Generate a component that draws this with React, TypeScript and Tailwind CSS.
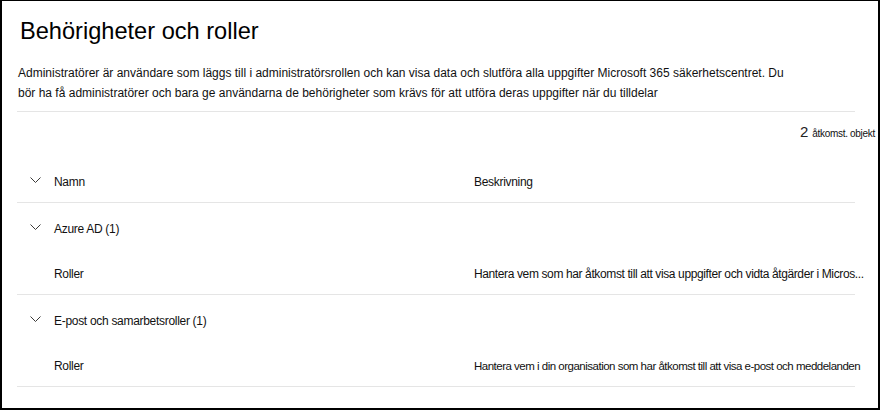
import React from "react";

function Chevron() {
  return (
    <svg width="11" height="6" viewBox="0 0 11 6" className="shrink-0 -mt-[4px]">
      <polyline points="0.5,0.5 5.5,5.5 10.5,0.5" fill="none" stroke="#3b3a39" strokeWidth="1" />
    </svg>
  );
}

export default function App() {
  return (
    <div className="w-[880px] h-[410px] bg-white border-black border-t border-l-2 border-r-2 border-b-2 overflow-hidden font-['Liberation_Sans',Arial,sans-serif] text-[#111]">
      <div className="pl-[15px] pr-[3px]">
        <h1 className="ml-[3px] pt-[14px] text-[23.6px] leading-[32px] text-black">Behörigheter och roller</h1>
        <p className="ml-px mt-[16px] text-[12px] leading-[20px]">
          Administratörer är användare som läggs till i administratörsrollen och kan visa data och slutföra alla uppgifter Microsoft 365 säkerhetscentret. Du
          <br />
          bör ha få administratörer och bara ge användarna de behörigheter som krävs för att utföra deras uppgifter när du tilldelar
        </p>
        <div className="mt-[8px] mr-[20px] h-px bg-[#e5e5e5]" />
        <div className="h-[48px] pt-[11px] flex items-baseline justify-end">
          <span className="text-[15px] leading-[18px] font-light text-[#222]">2</span>
          <span className="ml-[4px] text-[10px] leading-[12px] tracking-[-0.3px]">åtkomst. objekt</span>
        </div>
        <div className="mr-[20px] text-[12px] tracking-[-0.3px]">
          <div className="h-[43px] flex items-center pt-[2px] pl-[13px] border-b border-[#e5e5e5]">
            <Chevron />
            <div className="ml-[13px] w-[420px] shrink-0 leading-[16px]">Namn</div>
            <div className="leading-[16px]">Beskrivning</div>
          </div>
          <div className="h-[50px] flex items-center pt-[2px] pl-[13px]">
            <Chevron />
            <div className="ml-[13px] leading-[16px]">Azure AD (1)</div>
          </div>
          <div className="h-[42px] flex items-center pl-[37px] border-b border-[#e5e5e5]">
            <div className="w-[420px] shrink-0 leading-[16px]">Roller</div>
            <div className="leading-[16px] whitespace-nowrap tracking-[-0.38px]">Hantera vem som har åtkomst till att visa uppgifter och vidta åtgärder i Micros...</div>
          </div>
          <div className="h-[50px] flex items-center pt-[2px] pl-[13px]">
            <Chevron />
            <div className="ml-[13px] leading-[16px]">E-post och samarbetsroller (1)</div>
          </div>
          <div className="h-[42px] flex items-center pl-[37px] border-b border-[#e5e5e5]">
            <div className="w-[420px] shrink-0 leading-[16px]">Roller</div>
            <div className="leading-[16px] whitespace-nowrap text-[11.5px] tracking-[-0.5px]">Hantera vem i din organisation som har åtkomst till att visa e-post och meddelanden</div>
          </div>
        </div>
      </div>
    </div>
  );
}
